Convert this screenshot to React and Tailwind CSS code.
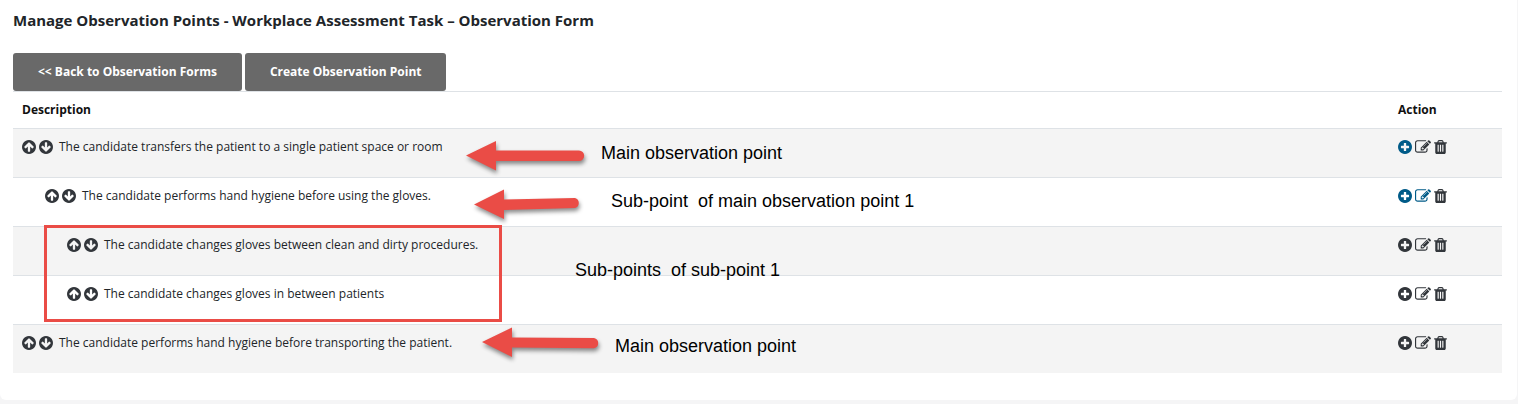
import React from 'react';

/* ─── Icons ─── */
const DISC =
  'm0 0q0 209-103 385.500t-279.500 279.500-385.500 103-385.500-103-279.500-279.500-103-385.500 103-385.500 279.500-279.500 385.500-103 385.500 103 279.500 279.500 103 385.500z';

const ARROW =
  'M1412 895q0-27-18-45l-362-362-91-91q-18-18-45-18t-45 18l-91 91-362 362q-18 18-18 45t18 45l91 91q18 18 45 18t45-18l189-189v502q0 26 19 45t45 19h128q26 0 45-19t19-45v-502l189 189q19 19 45 19t45-19l91-91q18-18 18-45z';

const ArrowCircle = ({ className }) => (
  <svg className={className} viewBox="128 128 1536 1536" fill="currentColor" fillRule="evenodd">
    <path d={`${ARROW}M1664 896${DISC}`} />
  </svg>
);

const PlusCircle = () => (
  <svg className="h-3.5 w-3.5" viewBox="128 128 1536 1536" fill="currentColor" fillRule="evenodd">
    <path
      d={`M1344 960v-128q0-26-19-45t-45-19h-256v-256q0-26-19-45t-45-19h-128q-26 0-45 19t-19 45v256h-256q-26 0-45 19t-19 45v128q0 26 19 45t45 19h256v256q0 26 19 45t45 19h128q26 0 45-19t19-45v-256h256q26 0 45-19t19-45zM1664 896${DISC}`}
    />
  </svg>
);

const PencilSquare = () => (
  <svg className="h-4 w-4" viewBox="0 0 1792 1792" fill="currentColor">
    <path d="M888 1184l116-116-152-152-116 116v56h96v96h56zm440-720q-16-16-33 1l-350 350q-17 17-1 33t33-1l350-350q17-17 1-33zm80 594v190q0 119-84.500 203.500t-203.500 84.500h-832q-119 0-203.500-84.500t-84.500-203.500v-832q0-119 84.500-203.500t203.500-84.500h832q63 0 117 25 15 7 18 23 3 17-9 29l-49 49q-14 14-32 8-23-6-45-6h-832q-66 0-113 47t-47 113v832q0 66 47 113t113 47h832q66 0 113-47t47-113v-126q0-13 9-22l64-64q15-15 35-7t20 29zm-96-738l288 288-672 672h-288v-288zm444 132l-92 92-288-288 92-92q28-28 68-28t68 28l152 152q28 28 28 68t-28 68z" />
  </svg>
);

const Trash = () => (
  <svg className="h-3.5 w-[13px]" viewBox="192 128 1408 1536" fill="currentColor">
    <path d="M704 1376v-704q0-14-9-23t-23-9h-64q-14 0-23 9t-9 23v704q0 14 9 23t23 9h64q14 0 23-9t9-23zm256 0v-704q0-14-9-23t-23-9h-64q-14 0-23 9t-9 23v704q0 14 9 23t23 9h64q14 0 23-9t9-23zm256 0v-704q0-14-9-23t-23-9h-64q-14 0-23 9t-9 23v704q0 14 9 23t23 9h64q14 0 23-9t9-23zm-544-992h448l-48-117q-7-9-17-11h-317q-10 2-17 11zm928 32v64q0 14-9 23t-23 9h-96v948q0 83-47 143.500t-113 60.500h-832q-66 0-113-58.500t-47-141.500v-952h-96q-14 0-23-9t-9-23v-64q0-14 9-23t23-9h309l70-167q15-37 54-63t79-26h320q40 0 79 26t54 63l70 167h309q14 0 23 9t9 23z" />
  </svg>
);

const indents = ['pl-[9px]', 'pl-8', 'pl-[54px]'];

const points = [
  { text: 'The candidate transfers the patient to a single patient space or room', level: 0, add: 'text-[#005b88]', edit: 'text-[#32363b]' },
  { text: 'The candidate performs hand hygiene before using the gloves.', level: 1, add: 'text-[#005b88]', edit: 'text-[#005b88]' },
  { text: 'The candidate changes gloves between clean and dirty procedures.', level: 2, add: 'text-[#32363b]', edit: 'text-[#32363b]' },
  { text: 'The candidate changes gloves in between patients', level: 2, add: 'text-[#32363b]', edit: 'text-[#32363b]' },
  { text: 'The candidate performs hand hygiene before transporting the patient.', level: 0, add: 'text-[#32363b]', edit: 'text-[#32363b]' },
];

const notes = [
  { text: 'Main observation point', place: 'left-[588px] top-[50px]' },
  { text: 'Sub-point  of main observation point 1', place: 'left-[598px] top-[98px]' },
  { text: 'Sub-points  of sub-point 1', place: 'left-[562px] top-[167px]' },
  { text: 'Main observation point', place: 'left-[602px] top-[243px]' },
];

const arrows = [
  { place: 'left-[453px] top-[45px]', d: 'M0 19.500L30 5V14.500H113a5.200 5.200 0 0 1 0 10.400H30V34.500Z' },
  { place: 'left-[461px] top-[94px]', d: 'M0 19.500L30 4.500V14.500L101 13a5.200 5.200 0 0 1 0 10L30 25V34Z' },
  { place: 'left-[469px] top-[232px]', d: 'M0 19L30 4.500V14.500L112 15a5.200 5.200 0 0 1 0 10.200L30 24.500V34Z' },
];

function Annotations() {
  return (
    <div className="pointer-events-none absolute inset-0">
      <div className="absolute left-[31px] top-[134px] h-[97px] w-[458px] border-3 border-[#ea4c46]" />
      {arrows.map((arrow) => (
        <svg
          key={arrow.place}
          className={`absolute h-11 w-32 overflow-visible drop-shadow-[1px_3px_2px_rgba(0,0,0,0.45)] ${arrow.place}`}
          viewBox="0 0 128 44"
          fill="#ea4c46"
        >
          <path d={arrow.d} />
        </svg>
      ))}
      {notes.map((note) => (
        <span
          key={note.place}
          className={`absolute whitespace-pre font-['Liberation_Sans',sans-serif] text-lg leading-6 text-black ${note.place}`}
        >
          {note.text}
        </span>
      ))}
    </div>
  );
}

export default function App() {
  return (
    <div className="min-h-screen bg-[#f5f5f6] pr-px font-['Open_Sans',sans-serif] text-[#212529]">
      <main className="rounded-b-md bg-white px-[13px] pt-2.5 pb-[27px]">
        <h1 className="text-[15px] leading-5 font-bold">
          Manage Observation Points - Workplace Assessment Task – Observation Form
        </h1>

        <div className="mt-[23px] flex gap-[3px]">
          <button type="button" className="rounded-[3px] bg-[#696969] px-[25px] py-[9px] text-xs leading-5 font-bold text-white">
            &lt;&lt; Back to Observation Forms
          </button>
          <button type="button" className="rounded-[3px] bg-[#696969] px-[25px] py-[9px] text-xs leading-5 font-bold text-white">
            Create Observation Point
          </button>
        </div>

        <div className="relative mr-0.5">
          <table className="w-full border-separate border-spacing-0 text-left text-xs leading-5">
            <thead>
              <tr className="text-[#111]">
                <th className="border-t border-[#dee2e6] px-[9px] py-2 font-bold">Description</th>
                <th className="w-[113px] border-t border-[#dee2e6] px-[9px] py-2 font-bold">Action</th>
              </tr>
            </thead>
            <tbody>
              {points.map((point) => (
                <tr key={point.text} className="align-top odd:bg-[#f4f4f4]">
                  <td className={`border-t border-[#dee2e6] pt-2 pb-5 ${indents[point.level]}`}>
                    <div className="flex items-center gap-[3px] text-[#32363b]">
                      <button type="button" aria-label="Move up">
                        <ArrowCircle className="h-3.5 w-3.5" />
                      </button>
                      <button type="button" aria-label="Move down">
                        <ArrowCircle className="h-3.5 w-3.5 rotate-180" />
                      </button>
                      <span className="pl-[3px] text-[#212529]">{point.text}</span>
                    </div>
                  </td>
                  <td className="border-t border-[#dee2e6] px-[9px] pt-2 pb-5">
                    <div className="flex h-5 items-center gap-[3px] text-[#32363b]">
                      <button type="button" aria-label="Add sub-point" className={point.add}>
                        <PlusCircle />
                      </button>
                      <button type="button" aria-label="Edit" className={point.edit}>
                        <PencilSquare />
                      </button>
                      <button type="button" aria-label="Delete">
                        <Trash />
                      </button>
                    </div>
                  </td>
                </tr>
              ))}
            </tbody>
          </table>

          <Annotations />
        </div>
      </main>
    </div>
  );
}
